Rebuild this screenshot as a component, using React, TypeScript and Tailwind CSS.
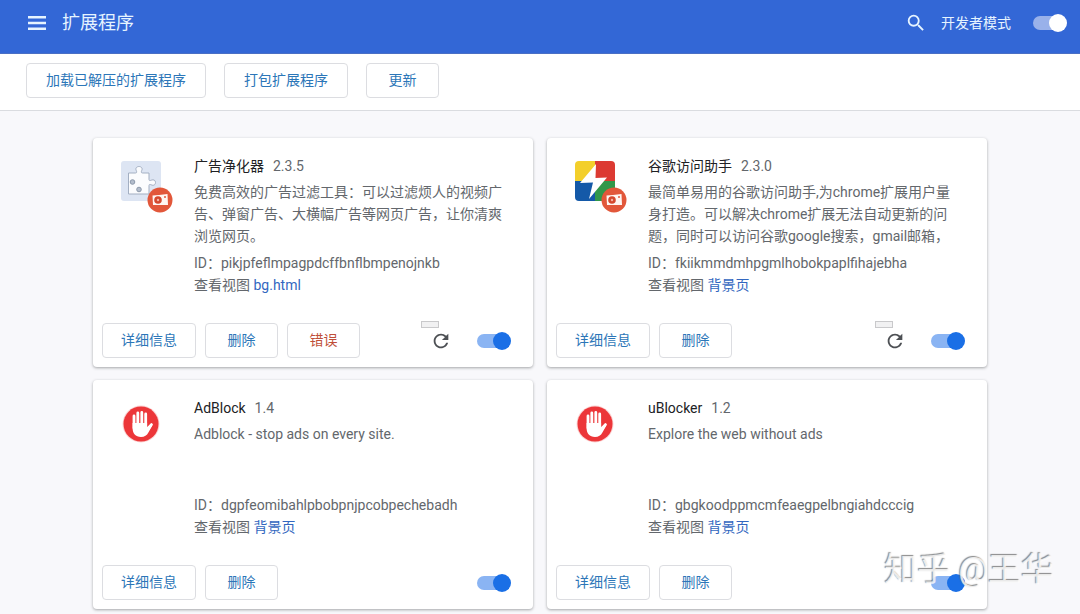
import { useState } from 'react';
import type { ReactNode } from 'react';
import { MdRefresh, MdSearch } from 'react-icons/md';

type Extension = {
  name: string;
  version: string;
  description: string;
  id: string;
  view: string;
  icon: ReactNode;
  unpacked?: boolean;
  hasErrors?: boolean;
};

function MenuIcon() {
  return (
    <svg viewBox="0 0 24 24" className="h-6 w-6" fill="currentColor">
      <path d="M3 5h18v2.500H3zM3 10.800h18v2.500H3zM3 16.500h18V19H3z" />
    </svg>
  );
}

function CameraBadge() {
  return (
    <svg viewBox="0 0 26 26" className="absolute -right-3 -bottom-3 h-[26px] w-[26px]">
      <circle cx="13" cy="13" r="12.500" fill="#e2573a" />
      <path d="M5.500 8.500 12 8l8.500-1L21 18H6z" fill="#fff6f2" />
      <circle cx="11" cy="13" r="3.800" fill="#d4482e" />
      <circle cx="11" cy="13" r="1.200" fill="#f3b3a3" />
      <circle cx="18" cy="10" r="1" fill="#e2573a" />
    </svg>
  );
}

function PuzzleIcon() {
  return (
    <svg viewBox="0 0 40 40" className="h-10 w-10">
      <rect width="40" height="40" rx="3" fill="#dde5f3" />
      <path
        d="M7.500 12h7c1.500 0 1.300-1.300.8-2.400C14 7 16 5.500 18 5.500s4 1.500 2.700 4.100c-.5 1.100-.7 2.400.8 2.400H28v6.500c0 1.300 1 1.200 2.200.7 2.600-1.200 4.300.3 4.300 2.300s-1.700 3.600-4.300 2.300c-1.200-.5-2.200-.6-2.200.7V33H7.500z"
        fill="#fbfcfe"
        stroke="#a3afc2"
        strokeWidth="1"
      />
      <circle cx="11.500" cy="21" r="2.300" fill="#b3bdcc" stroke="#8b98ab" />
      <circle cx="18" cy="28.500" r="2.300" fill="#b3bdcc" stroke="#8b98ab" />
    </svg>
  );
}

function BoltIcon() {
  return (
    <svg viewBox="0 0 40 40" className="h-10 w-10">
      <clipPath id="bolt-tile">
        <rect width="40" height="40" rx="4" />
      </clipPath>
      <g clipPath="url(#bolt-tile)">
        <path d="M0 0h20v20H0z" fill="#f3cf2b" />
        <path d="M20 0h20v20H20z" fill="#dc3a32" />
        <path d="M0 20h20v20H0z" fill="#1459a8" />
        <path d="M20 20h20v20H20z" fill="#31974a" />
      </g>
      <path d="M21 3 5 22l13-.5L14 38l18-21.500-11.500.500z" fill="#fff" />
    </svg>
  );
}

function HandIcon() {
  return (
    <svg viewBox="0 0 40 40" className="h-10 w-10">
      <circle cx="20" cy="21" r="18.500" fill="#fbd3d3" />
      <circle cx="20" cy="21" r="17.500" fill="#ec3639" />
      <g stroke="#fff" strokeLinecap="round" fill="none">
        <path d="M13 13v12M16.800 10v13M20.800 9.500V23M24.700 11v12" strokeWidth="2.800" />
        <path d="M30.500 21.500 26 27.500" strokeWidth="2.800" />
      </g>
      <path
        d="M11.600 20h14.500v4l2.800-2.500 2.500 1-4 7c-1.500 2.800-3.800 4.500-7.400 4.500-5.500 0-8.400-3.500-8.400-9z"
        fill="#fff"
      />
    </svg>
  );
}

const extensions: Extension[] = [
  {
    name: '广告净化器',
    version: '2.3.5',
    description:
      '免费高效的广告过滤工具：可以过滤烦人的视频广告、弹窗广告、大横幅广告等网页广告，让你清爽浏览网页。',
    id: 'pikjpfeflmpagpdcffbnflbmpenojnkb',
    view: 'bg.html',
    icon: <PuzzleIcon />,
    unpacked: true,
    hasErrors: true,
  },
  {
    name: '谷歌访问助手',
    version: '2.3.0',
    description:
      '最简单易用的谷歌访问助手,为chrome扩展用户量身打造。可以解决chrome扩展无法自动更新的问题，同时可以访问谷歌google搜索，gmail邮箱，',
    id: 'fkiikmmdmhpgmlhobokpaplfihajebha',
    view: '背景页',
    icon: <BoltIcon />,
    unpacked: true,
  },
  {
    name: 'AdBlock',
    version: '1.4',
    description: 'Adblock - stop ads on every site.',
    id: 'dgpfeomibahlpbobpnjpcobpechebadh',
    view: '背景页',
    icon: <HandIcon />,
  },
  {
    name: 'uBlocker',
    version: '1.2',
    description: 'Explore the web without ads',
    id: 'gbgkoodppmcmfeaegpelbngiahdcccig',
    view: '背景页',
    icon: <HandIcon />,
  },
];

function Toggle({ label, light = false }: { label: string; light?: boolean }) {
  const [on, setOn] = useState(true);
  return (
    <label className="relative flex h-[18px] w-[34px] cursor-pointer items-center">
      <input
        type="checkbox"
        aria-label={label}
        checked={on}
        onChange={() => setOn(!on)}
        className="peer sr-only"
      />
      <span
        className={`h-[14px] w-[30px] rounded-full ${light ? 'bg-[#99b1ea]' : 'bg-[#8ab4f3]'}`}
      />
      <span
        className={`absolute left-0 h-[18px] w-[18px] rounded-full peer-checked:left-4 ${light ? 'bg-white' : 'bg-[#1a6fe6]'}`}
      />
    </label>
  );
}

function OutlineButton({
  children,
  className = 'px-[18px] text-[#2c76b8]',
}: {
  children: ReactNode;
  className?: string;
}) {
  return (
    <button
      type="button"
      className={`h-[35px] min-w-[73px] rounded-[4px] border border-[#dcdde1] bg-white pb-0.5 text-sm whitespace-nowrap ${className}`}
    >
      {children}
    </button>
  );
}

const toolbarButton = 'px-[19px] text-[#2c76b8]';
const errorButton = 'px-[18px] text-[#c04f38]';

function ExtensionCard({ ext }: { ext: Extension }) {
  return (
    <article className="flex min-h-[229px] flex-col rounded-[4px] bg-white pb-[9px] shadow-[0_1px_3px_rgba(60,64,67,0.45)]">
      <div className="flex flex-1 gap-[33px] pt-[17px] pr-[27px] pl-7">
        <div className="relative mt-[6px] h-10 w-10 shrink-0">
          {ext.icon}
          {ext.unpacked && <CameraBadge />}
        </div>
        <div className="min-w-0 flex-1 text-sm leading-[22px] text-[#63676c]">
          <h2>
            <span className="text-[#202124]">{ext.name}</span>
            <span className="ml-[9px]">{ext.version}</span>
          </h2>
          <p className="mt-1 h-[66px] overflow-hidden">{ext.description}</p>
          <p className="mt-[5px]">ID：{ext.id}</p>
          <p>
            查看视图{' '}
            <a href="#view" className="text-[#3367c0]">
              {ext.view}
            </a>
          </p>
        </div>
      </div>
      <div className="flex items-center gap-[9px] pr-[22px] pl-[9px]">
        <OutlineButton>详细信息</OutlineButton>
        <OutlineButton>删除</OutlineButton>
        {ext.hasErrors && <OutlineButton className={errorButton}>错误</OutlineButton>}
        <div className="ml-auto flex items-center gap-[25px]">
          {ext.unpacked && (
            <button type="button" aria-label="重新加载" className="relative text-[#4d5054]">
              <MdRefresh size={22} />
              <span className="absolute -top-[9px] -left-[9px] h-[7px] w-[18px] border border-[#c9c9cb] bg-[#f1f1f2]" />
            </button>
          )}
          <Toggle label={ext.name} />
        </div>
      </div>
    </article>
  );
}

export default function App() {
  return (
    <div className="relative min-h-screen bg-[#f8f8fb] font-['Roboto','Noto_Sans_CJK_SC',sans-serif]">
      <header className="flex items-center border-b border-[#4a6fc4] bg-[#3367d6] pt-[9px] pr-[13px] pb-4 pl-[25px] text-[#e6f4ff]">
        <button type="button" aria-label="菜单">
          <MenuIcon />
        </button>
        <h1 className="ml-[13px] text-lg leading-7">扩展程序</h1>
        <button type="button" aria-label="搜索" className="ml-auto">
          <MdSearch size={22} />
        </button>
        <span className="mr-[22px] ml-[14px] text-sm">开发者模式</span>
        <Toggle label="开发者模式" light />
      </header>
      <div className="flex gap-[18px] border-b border-[#dadce0] bg-white px-[26px] pt-[9px] pb-3">
        <OutlineButton className={toolbarButton}>加载已解压的扩展程序</OutlineButton>
        <OutlineButton className={toolbarButton}>打包扩展程序</OutlineButton>
        <OutlineButton className={toolbarButton}>更新</OutlineButton>
      </div>
      <main className="mx-auto grid max-w-[894px] grid-cols-2 gap-x-[14px] gap-y-[13px] pt-[27px] pb-1">
        {extensions.map((ext) => (
          <ExtensionCard key={ext.id} ext={ext} />
        ))}
      </main>
      <p className="pointer-events-none absolute right-[26px] bottom-5 text-[33px] leading-[48px] text-white/80 [text-shadow:-1px_-1px_1px_rgba(90,90,90,0.7)]">
        知乎 @王华
      </p>
    </div>
  );
}
